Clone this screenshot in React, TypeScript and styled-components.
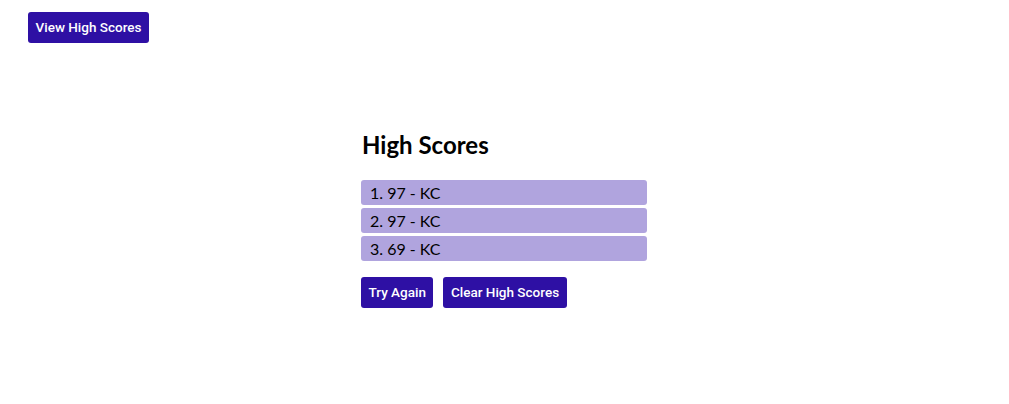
import React from "react";
import styled, { createGlobalStyle } from "styled-components";

const GlobalStyle = createGlobalStyle`
  html, body { margin: 0; padding: 0; background: #ffffff; }
  body { font-family: "Lato", "Noto Sans", sans-serif; color: #000; }
`;

const Page = styled.div`
  display: flex;
  flex-direction: column;
`;

const TopBar = styled.header`
  display: flex;
  padding: 12px 28px 0;
`;

const Button = styled.button`
  height: 31px;
  padding: 0 7.5px;
  border: none;
  border-radius: 3px;
  background: #2e10a4;
  color: #ffffff;
  font-family: "Roboto", "Liberation Sans", sans-serif;
  font-size: 13.5px;
  font-weight: 500;
  line-height: 31px;
  cursor: pointer;
`;

const Main = styled.main`
  display: flex;
  justify-content: center;
  padding: 87px 1px 0 0;
`;

const Column = styled.section`
  width: 286px;
  display: flex;
  flex-direction: column;
`;

const Heading = styled.h2`
  margin: 0 0 21px 1px;
  font-family: "Lato", sans-serif;
  font-size: 24px;
  font-weight: bold;
  line-height: 29px;
`;

const ScoreList = styled.ol`
  list-style: none;
  margin: 0;
  padding: 0;
  display: flex;
  flex-direction: column;
  gap: 3px;
`;

const ScoreItem = styled.li`
  height: 25px;
  box-sizing: border-box;
  padding: 3px 9px;
  border-radius: 3px;
  background: #b0a4de;
  font-family: "Lato", sans-serif;
  font-size: 16px;
  line-height: 19px;
`;

const Actions = styled.div`
  display: flex;
  gap: 10px;
  margin-top: 16px;
`;

const scores = [
  { score: 97, initials: "KC" },
  { score: 97, initials: "KC" },
  { score: 69, initials: "KC" },
];

export default function App() {
  return (
    <>
      <GlobalStyle />
      <Page>
        <TopBar>
          <Button>View High Scores</Button>
        </TopBar>
        <Main>
          <Column>
            <Heading>High Scores</Heading>
            <ScoreList>
              {scores.map((s, i) => (
                <ScoreItem key={i}>
                  {i + 1}. {s.score} - {s.initials}
                </ScoreItem>
              ))}
            </ScoreList>
            <Actions>
              <Button>Try Again</Button>
              <Button>Clear High Scores</Button>
            </Actions>
          </Column>
        </Main>
      </Page>
    </>
  );
}
